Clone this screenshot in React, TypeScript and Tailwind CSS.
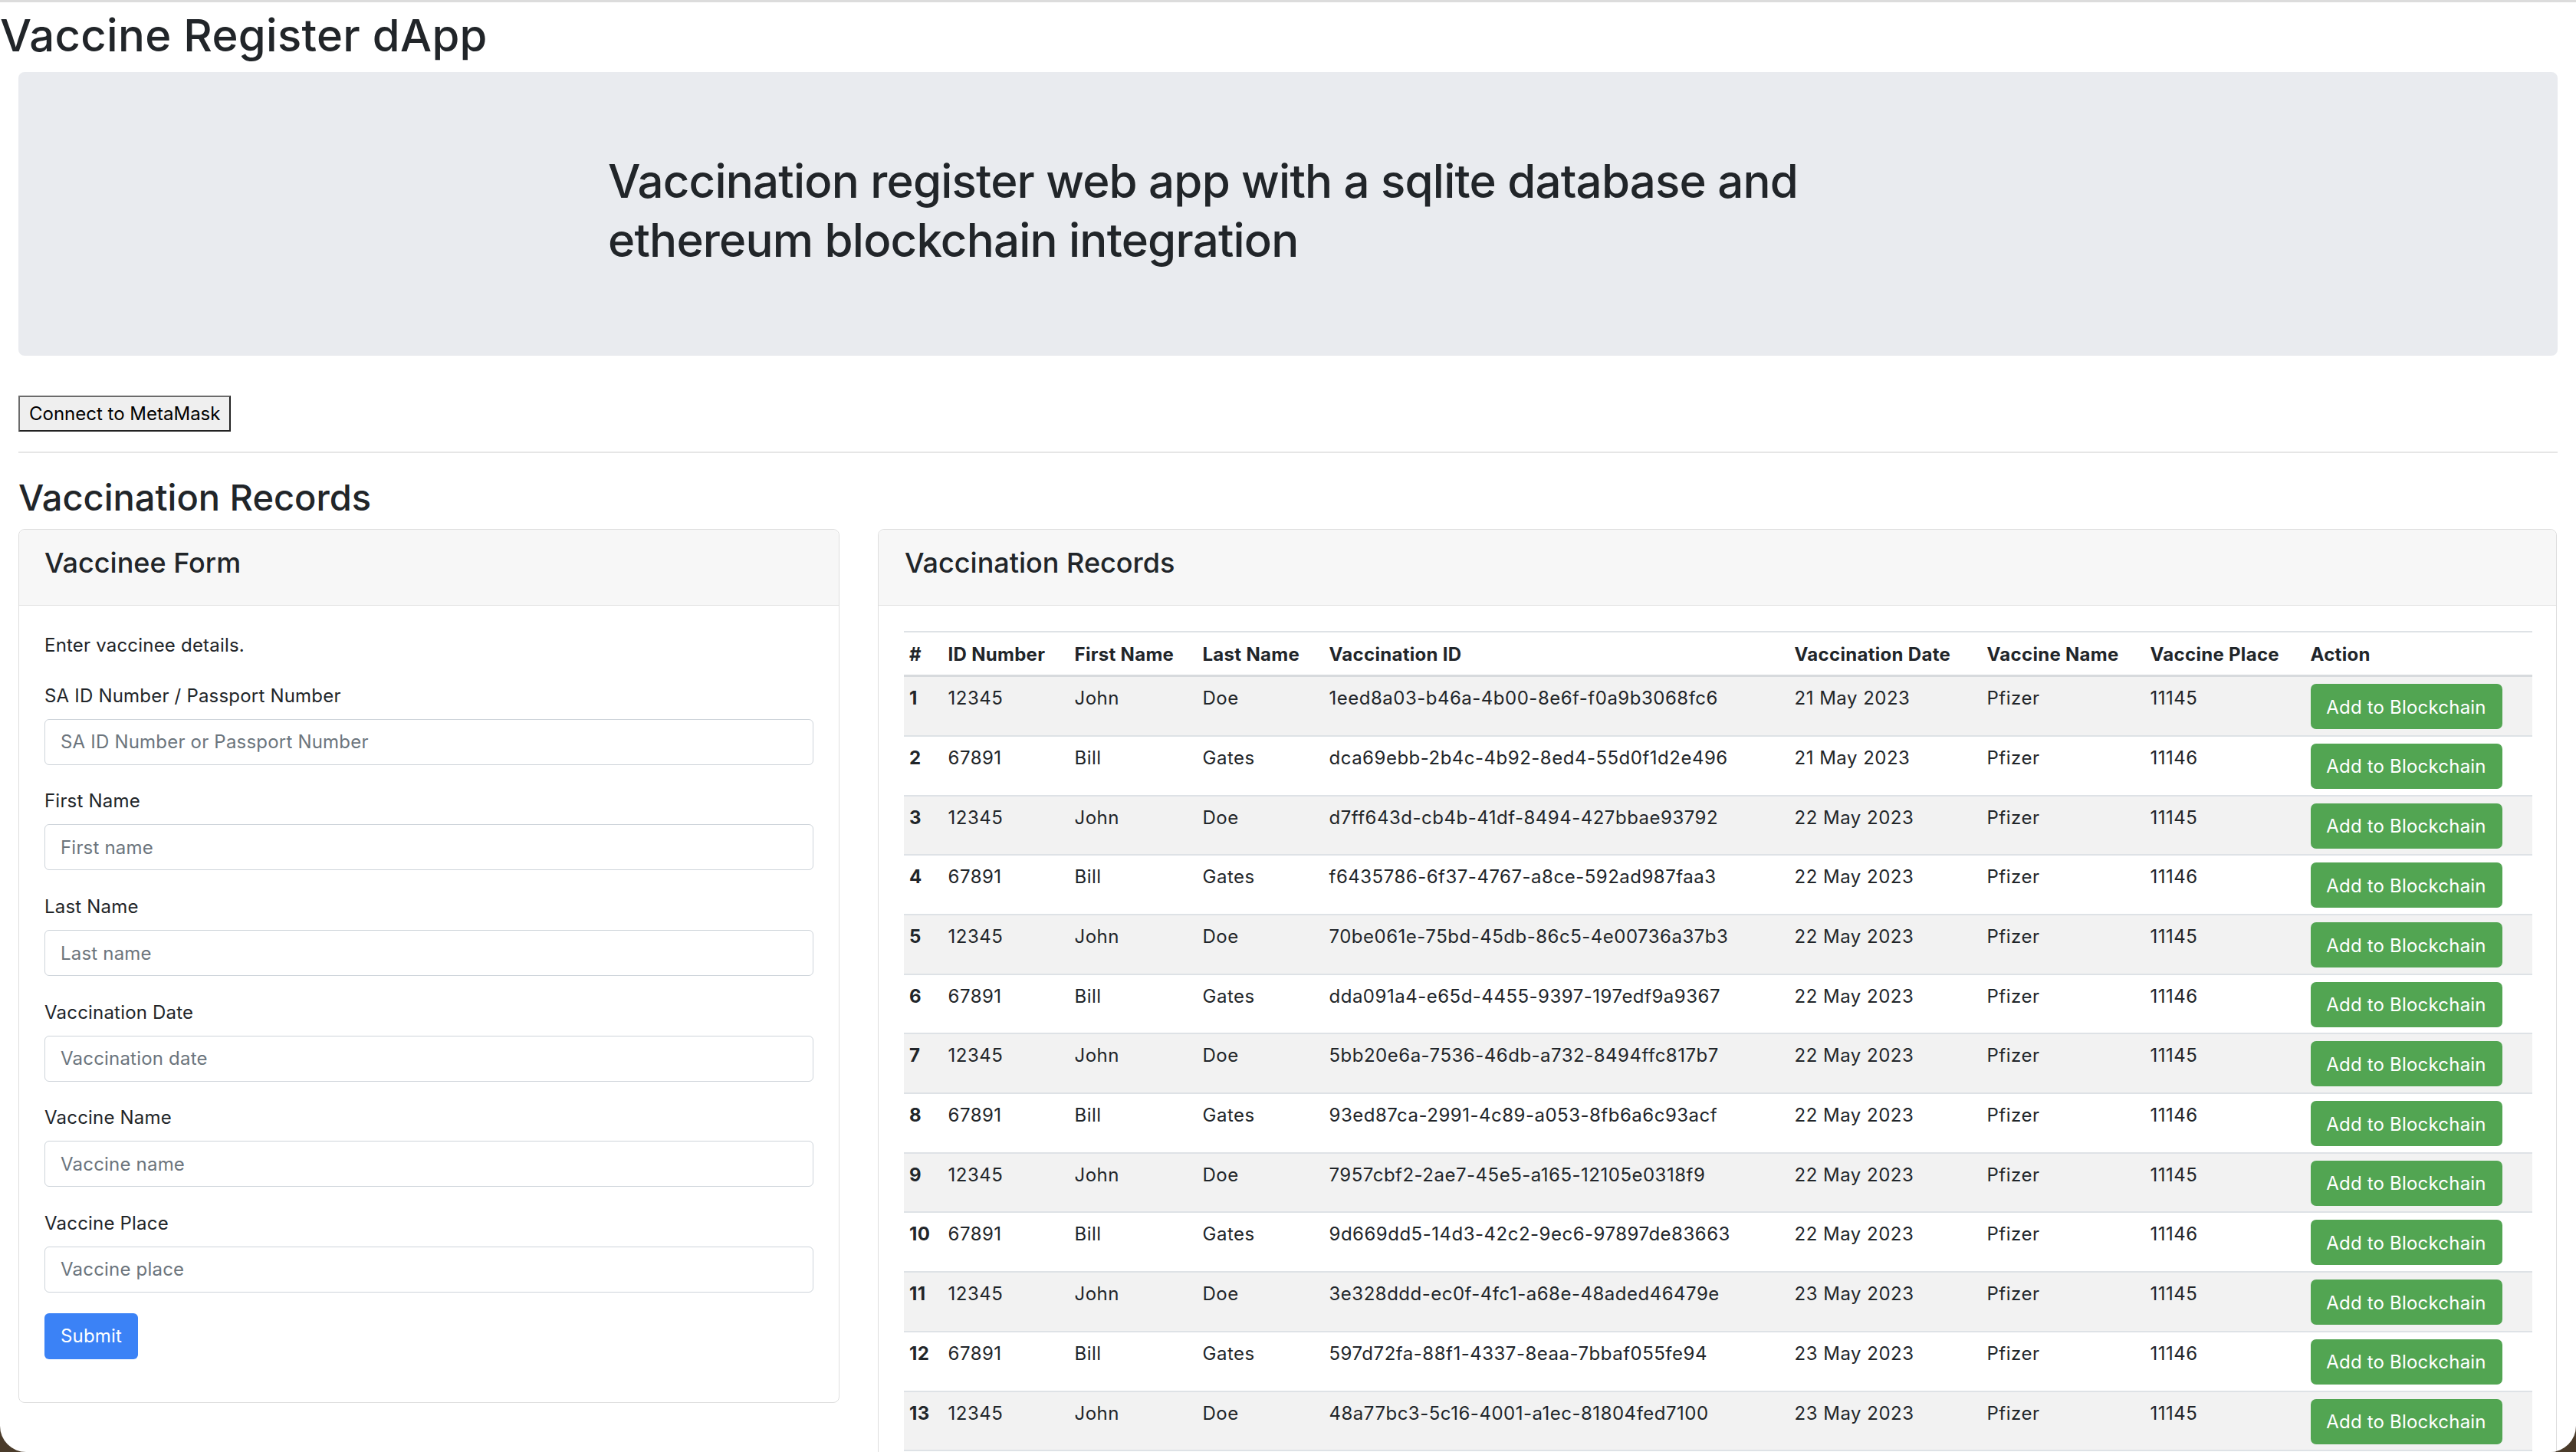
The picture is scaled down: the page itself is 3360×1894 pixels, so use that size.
import React from 'react';

type VaccRecord = {
    id: string;
    first: string;
    last: string;
    vaccId: string;
    date: string;
    name: string;
    place: string;
};

const records: VaccRecord[] = [
    { id: '12345', first: 'John', last: 'Doe', vaccId: '1eed8a03-b46a-4b00-8e6f-f0a9b3068fc6', date: '21 May 2023', name: 'Pfizer', place: '11145' },
    { id: '67891', first: 'Bill', last: 'Gates', vaccId: 'dca69ebb-2b4c-4b92-8ed4-55d0f1d2e496', date: '21 May 2023', name: 'Pfizer', place: '11146' },
    { id: '12345', first: 'John', last: 'Doe', vaccId: 'd7ff643d-cb4b-41df-8494-427bbae93792', date: '22 May 2023', name: 'Pfizer', place: '11145' },
    { id: '67891', first: 'Bill', last: 'Gates', vaccId: 'f6435786-6f37-4767-a8ce-592ad987faa3', date: '22 May 2023', name: 'Pfizer', place: '11146' },
    { id: '12345', first: 'John', last: 'Doe', vaccId: '70be061e-75bd-45db-86c5-4e00736a37b3', date: '22 May 2023', name: 'Pfizer', place: '11145' },
    { id: '67891', first: 'Bill', last: 'Gates', vaccId: 'dda091a4-e65d-4455-9397-197edf9a9367', date: '22 May 2023', name: 'Pfizer', place: '11146' },
    { id: '12345', first: 'John', last: 'Doe', vaccId: '5bb20e6a-7536-46db-a732-8494ffc817b7', date: '22 May 2023', name: 'Pfizer', place: '11145' },
    { id: '67891', first: 'Bill', last: 'Gates', vaccId: '93ed87ca-2991-4c89-a053-8fb6a6c93acf', date: '22 May 2023', name: 'Pfizer', place: '11146' },
    { id: '12345', first: 'John', last: 'Doe', vaccId: '7957cbf2-2ae7-45e5-a165-12105e0318f9', date: '22 May 2023', name: 'Pfizer', place: '11145' },
    { id: '67891', first: 'Bill', last: 'Gates', vaccId: '9d669dd5-14d3-42c2-9ec6-97897de83663', date: '22 May 2023', name: 'Pfizer', place: '11146' },
    { id: '12345', first: 'John', last: 'Doe', vaccId: '3e328ddd-ec0f-4fc1-a68e-48aded46479e', date: '23 May 2023', name: 'Pfizer', place: '11145' },
    { id: '67891', first: 'Bill', last: 'Gates', vaccId: '597d72fa-88f1-4337-8eaa-7bbaf055fe94', date: '23 May 2023', name: 'Pfizer', place: '11146' },
    { id: '12345', first: 'John', last: 'Doe', vaccId: '48a77bc3-5c16-4001-a1ec-81804fed7100', date: '23 May 2023', name: 'Pfizer', place: '11145' },
];

const fields = [
    { label: 'SA ID Number / Passport Number', placeholder: 'SA ID Number or Passport Number' },
    { label: 'First Name', placeholder: 'First name' },
    { label: 'Last Name', placeholder: 'Last name' },
    { label: 'Vaccination Date', placeholder: 'Vaccination date' },
    { label: 'Vaccine Name', placeholder: 'Vaccine name' },
    { label: 'Vaccine Place', placeholder: 'Vaccine place' },
];

const columns = [
    { title: '#', w: 'w-[50.5px]' },
    { title: 'ID Number', w: 'w-[165px]' },
    { title: 'First Name', w: 'w-[167px]' },
    { title: 'Last Name', w: 'w-[165px]' },
    { title: 'Vaccination ID', w: 'w-[607px]' },
    { title: 'Vaccination Date', w: 'w-[251px]' },
    { title: 'Vaccine Name', w: 'w-[213px]' },
    { title: 'Vaccine Place', w: 'w-[209px]' },
    { title: 'Action', w: 'w-[296px]' },
];

const VaccineeForm: React.FC = () => (
    <div className="rounded-[8px] border border-[#dedede] bg-white">
        {/* Header */}
        <div className="bg-[#f7f7f7] border-b border-[#dedede] rounded-t-[8px] px-[33px] pt-[22px] pb-[33px]">
            <h3 className="text-[36px] leading-[1.2] font-medium">Vaccinee Form</h3>
        </div>
        <div className="p-[33px] pt-[34px] pb-[56px] text-[24px] tracking-[0.2px]">
            <p className="leading-[36px] mb-[29.6px]">Enter vaccinee details.</p>
            {fields.map((f, i) => (
                <div key={f.label} className={i === fields.length - 1 ? 'mb-[27px]' : 'mb-[29.6px]'}>
                    <label className="block leading-[36px] mb-[12px]">{f.label}</label>
                    <input
                        type="text"
                        placeholder={f.placeholder}
                        className="block w-full h-[60px] px-[20px] tracking-[0.2px] border border-[#ced4da] rounded-[6px] placeholder:text-[#6c757d] outline-none"
                    />
                </div>
            ))}
            <button className="h-[60px] w-[122px] bg-[#3b82f6] text-white rounded-[6px]">
                Submit
            </button>
        </div>
    </div>
);

const RecordsTable: React.FC = () => (
    <div className="rounded-[8px] border border-[#dedede] bg-white">
        <div className="bg-[#f7f7f7] border-b border-[#dedede] rounded-t-[8px] px-[34px] pt-[22px] pb-[33px]">
            <h3 className="text-[36px] leading-[1.2] font-medium">Vaccination Records</h3>
        </div>
        <div className="p-[33px]">
            <table className="w-full table-fixed border-collapse text-left text-[24px] leading-[36px] tracking-[0.5px]">
                <thead>
                    <tr className="border-t-2 border-b-[3px] border-t-[#dee2e6] border-b-[#d7dadd]">
                        {columns.map((c) => (
                            <th key={c.title} className={`${c.w} font-bold tracking-[0.3px] pl-[7px] pt-[11px] pb-[8px] whitespace-nowrap`}>
                                {c.title}
                            </th>
                        ))}
                    </tr>
                </thead>
                <tbody>
                    {records.map((r, i) => (
                        <tr key={i} className={`border-b-2 border-[#dee2e6] align-top ${i % 2 === 0 ? 'bg-[#f2f2f2]' : 'bg-white'}`}>
                            <th className="font-bold pl-[7px] pt-[10px] pb-[6.7px]">{i + 1}</th>
                            <td className="pl-[7px] pt-[10px]">{r.id}</td>
                            <td className="pl-[7px] pt-[10px]">{r.first}</td>
                            <td className="pl-[7px] pt-[10px]">{r.last}</td>
                            <td className="pl-[7px] pt-[10px] whitespace-nowrap">{r.vaccId}</td>
                            <td className="pl-[7px] pt-[10px]">{r.date}</td>
                            <td className="pl-[7px] pt-[10px]">{r.name}</td>
                            <td className="pl-[7px] pt-[10px]">{r.place}</td>
                            <td className="pl-[7px] pt-[9px] pb-[7.7px]">
                                <button className="h-[59px] w-[250px] rounded-[7px] bg-[#52a552] text-white tracking-[0.2px] leading-[36px] pt-[2px] whitespace-nowrap">
                                    Add to Blockchain
                                </button>
                            </td>
                        </tr>
                    ))}
                </tbody>
            </table>
        </div>
    </div>
);

export default function App() {
    return (
        <div className="w-[3360px] h-[1894px] bg-[#4a3b2a]">
            <div className="h-full bg-white rounded-b-[34px] overflow-hidden border-t-[3px] border-[#dcdcdc] text-[#212529] font-['Inter',sans-serif]">
                {/* Title */}
                <h1 className="mt-[9px] text-[58px] leading-[1.2] font-medium tracking-[0.3px]">Vaccine Register dApp</h1>

                <div className="px-[24px]">
                    {/* Jumbotron */}
                    <div className="mt-[12.4px] h-[370px] bg-[#e9ebef] rounded-[8px] pt-[104px]">
                        <p className="w-[1774px] mx-auto text-[60px] leading-[77px] font-medium tracking-[-0.8px]">
                            Vaccination register web app with a sqlite database and
                            <br />
                            ethereum blockchain integration
                        </p>
                    </div>

                    {/* MetaMask */}
                    <button className="mt-[52px] h-[47px] px-[12px] pt-[2px] bg-[#efefef] border-2 border-t-[#6b6b6b] border-l-[#6b6b6b] border-b-[#222] border-r-[#222] text-black text-[24px] leading-none">
                        Connect to MetaMask
                    </button>

                    <hr className="mt-[26px] border-0 border-t-2 border-[#e6e6e6]" />

                    <h2 className="mt-[29.7px] text-[47px] leading-[1.2] font-medium">Vaccination Records</h2>

                    <div className="mt-[13px] grid grid-cols-[1071px_2190px] gap-[50px] items-start">
                        <VaccineeForm />
                        <RecordsTable />
                    </div>
                </div>
            </div>
        </div>
    );
}
